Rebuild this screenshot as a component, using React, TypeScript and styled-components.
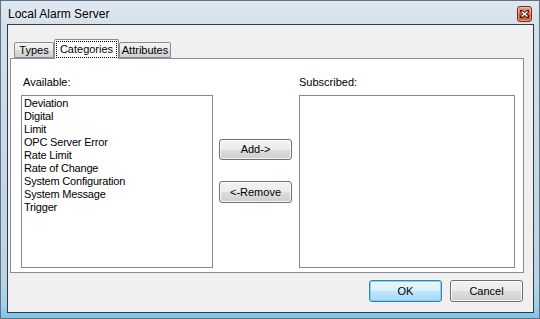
import React from "react";
import styled, { createGlobalStyle } from "styled-components";

const Global = createGlobalStyle`
  html, body { margin: 0; padding: 0; background: #ffffff; }
  body { font-family: "Liberation Sans", Arial, sans-serif; }
  * { box-sizing: border-box; }
`;

const Frame = styled.div`
  width: 540px;
  height: 319px;
  display: flex;
  flex-direction: column;
  border: 1px solid #5f7383;
  background: linear-gradient(
    to bottom,
    #dfe8f0 0%,
    #d3e0ea 8%,
    #c8d8e5 50%,
    #bcd3e4 88%,
    #9fd0ec 96%,
    #7cc5ea 100%
  );
  overflow: hidden;
`;

const TitleBar = styled.div`
  height: 23px;
  display: flex;
  align-items: center;
  justify-content: space-between;
  padding: 0 7px 0 7px;
`;

const Title = styled.div`
  font-family: "Liberation Sans", Arial, sans-serif;
  font-size: 12px;
  color: #000000;
  line-height: 14px;
  padding-top: 2px;
  text-shadow: 0 0 6px rgba(255, 255, 255, 0.9);
`;

const CloseButton = styled.div`
  width: 15px;
  height: 16px;
  margin-top: 2px;
  border: 1px solid #7a2a1a;
  border-radius: 3px;
  background: linear-gradient(to bottom, #e8a792 0%, #d77457 45%, #c34828 55%, #cf6a45 100%);
  display: flex;
  align-items: center;
  justify-content: center;
  box-shadow: inset 0 0 0 1px rgba(255, 220, 200, 0.45);
`;

const Client = styled.div`
  flex: 1;
  margin: 0 5px 5px 6px;
  border: 1px solid #2e3a44;
  background: #f0f0f0;
  display: flex;
  flex-direction: column;
  padding: 14px 8px 0 2px;
`;

const TabStrip = styled.div`
  display: flex;
  align-items: flex-end;
  height: 19px;
  padding-left: 4px;
  position: relative;
  z-index: 1;
`;

const Tab = styled.div<{ $active?: boolean; $w: number }>`
  width: ${(p) => p.$w}px;
  font-size: 11px;
  line-height: 13px;
  color: #000;
  border: 1px solid #898c95;
  border-bottom: ${(p) => (p.$active ? "none" : "1px solid #898c95")};
  border-radius: 2px 2px 0 0;
  height: ${(p) => (p.$active ? "20px" : "16px")};
  margin-bottom: ${(p) => (p.$active ? "-1px" : "0")};
  padding-top: ${(p) => (p.$active ? "1px" : "1px")};
  background: ${(p) =>
    p.$active
      ? "#ffffff"
      : "linear-gradient(to bottom, #f3f3f3 0%, #ebebeb 50%, #dddddd 51%, #cfcfcf 100%)"};
  display: flex;
  justify-content: center;
  align-items: flex-start;
`;

const FocusLabel = styled.span`
  border: 1px dotted #000;
  padding: 1px 3px 1px 3px;
  line-height: 13px;
`;

const Panel = styled.div`
  width: 514px;
  height: 215px;
  border: 1px solid #898c95;
  background: #ffffff;
  display: flex;
  padding: 0 7px 0 10px;
`;

const Column = styled.div<{ $w: number }>`
  width: ${(p) => p.$w}px;
  display: flex;
  flex-direction: column;
  padding-top: 17px;
`;

const Label = styled.div<{ $indent: number }>`
  font-size: 11px;
  line-height: 13px;
  color: #000;
  padding-left: ${(p) => p.$indent}px;
  margin-bottom: 6px;
`;

const ListBox = styled.div`
  height: 173px;
  border: 1px solid #828790;
  background: #ffffff;
  padding: 1px 2px 0 2px;
  display: flex;
  flex-direction: column;
`;

const ListItem = styled.div`
  font-size: 11px;
  line-height: 13px;
  color: #000;
  white-space: nowrap;
  letter-spacing: -0.2px;
`;

const Middle = styled.div`
  display: flex;
  flex-direction: column;
  gap: 21px;
  padding-top: 80px;
  margin: 0 7px 0 6px;
`;

const Button = styled.div<{ $default?: boolean; $h?: number }>`
  width: 73px;
  height: ${(p) => p.$h ?? 22}px;
  border: 1px solid ${(p) => (p.$default ? "#3c7fb1" : "#707070")};
  border-radius: 3px;
  background: ${(p) =>
    p.$default
      ? "linear-gradient(to bottom, #eaf6fd 0%, #d9f0fc 50%, #bee6fd 51%, #a7d9f5 100%)"
      : "linear-gradient(to bottom, #f2f2f2 0%, #ebebeb 50%, #dddddd 51%, #cfcfcf 100%)"};
  box-shadow: inset 0 0 0 1px ${(p) => (p.$default ? "rgba(120, 210, 245, 0.9)" : "rgba(255,255,255,0.8)")};
  font-size: 11px;
  line-height: 13px;
  color: #000;
  display: flex;
  align-items: center;
  justify-content: center;
`;

const ButtonRow = styled.div`
  display: flex;
  justify-content: flex-end;
  gap: 8px;
  padding: 7px 1px 0 0;
  width: 514px;
`;

const available = [
  "Deviation",
  "Digital",
  "Limit",
  "OPC Server Error",
  "Rate Limit",
  "Rate of Change",
  "System Configuration",
  "System Message",
  "Trigger",
];

export default function App() {
  return (
    <>
      <Global />
      <Frame>
        <TitleBar>
          <Title>Local Alarm Server</Title>
          <CloseButton>
            <svg width="9" height="8" viewBox="0 0 9 8">
              <path d="M1 1 L8 7 M8 1 L1 7" stroke="#3a1208" strokeWidth="3" strokeLinecap="square" />
              <path d="M1.5 1.5 L7.5 6.5 M7.5 1.5 L1.5 6.5" stroke="#ffffff" strokeWidth="1.6" />
            </svg>
          </CloseButton>
        </TitleBar>
        <Client>
          <TabStrip>
            <Tab $w={40}>Types</Tab>
            <Tab $active $w={65}>
              <FocusLabel>Categories</FocusLabel>
            </Tab>
            <Tab $w={52}>Attributes</Tab>
          </TabStrip>
          <Panel>
            <Column $w={192}>
              <Label $indent={2}>Available:</Label>
              <ListBox>
                {available.map((a) => (
                  <ListItem key={a}>{a}</ListItem>
                ))}
              </ListBox>
            </Column>
            <Middle>
              <Button $h={21}>Add-&gt;</Button>
              <Button>&lt;-Remove</Button>
            </Middle>
            <Column $w={216}>
              <Label $indent={0}>Subscribed:</Label>
              <ListBox />
            </Column>
          </Panel>
          <ButtonRow>
            <Button $default>OK</Button>
            <Button>Cancel</Button>
          </ButtonRow>
        </Client>
      </Frame>
    </>
  );
}
